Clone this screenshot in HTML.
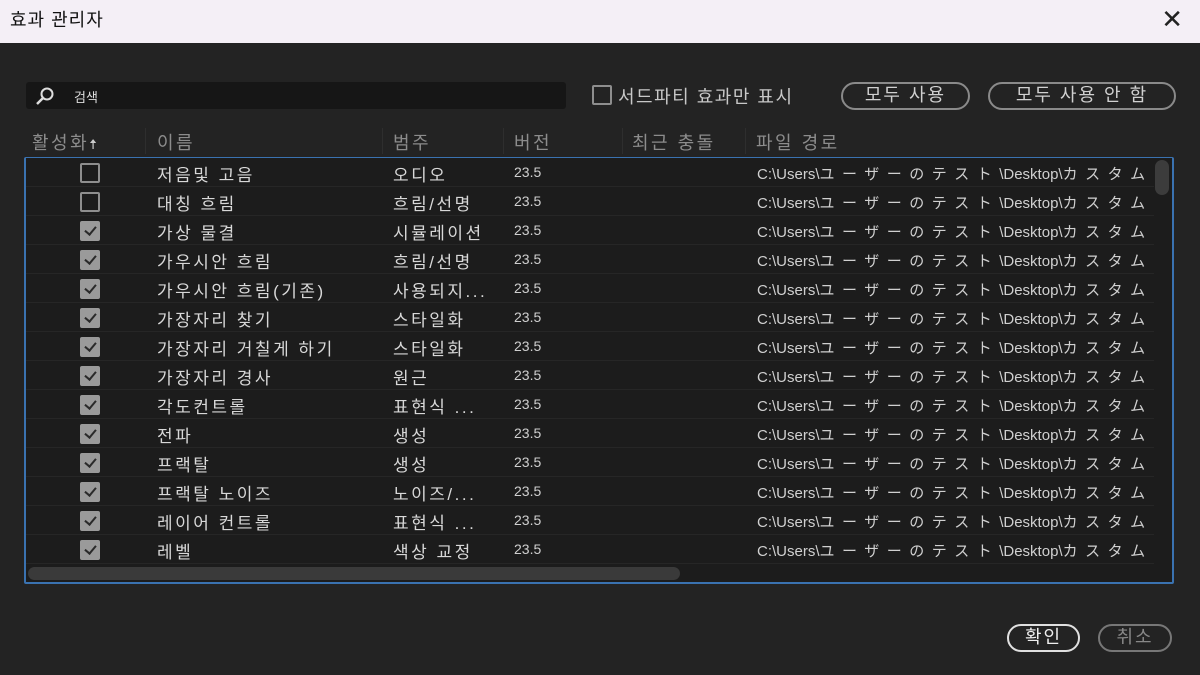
<!DOCTYPE html>
<html><head><meta charset="utf-8"><style>
*{margin:0;padding:0;box-sizing:border-box}
body{width:1200px;height:675px;background:#232323;font-family:"Liberation Sans","Noto Sans CJK KR",sans-serif;color:#d6d6d6;position:relative;overflow:hidden}
.title{position:absolute;left:0;top:0;width:1200px;height:43px;background:#f4eff6;color:#111;font-size:18px;line-height:40px;padding-left:10px;letter-spacing:1px}
.x{position:absolute;right:16px;top:6px;font-size:26px;color:#222;line-height:26px}
.search{position:absolute;left:26px;top:82px;width:540px;height:27px;background:#161616;border-radius:3px}
.search span{position:absolute;left:48px;top:5px;font-size:13px;color:#ddd}
.a{position:absolute}
.btn{position:absolute;border:2px solid #8a8a8a;border-radius:14px;font-size:18px;text-align:center;color:#d0d0d0;line-height:23px;letter-spacing:2px}
.hd{position:absolute;top:129px;font-size:18px;color:#8c8c8c;letter-spacing:2.5px}
.sep{position:absolute;top:128px;width:1px;height:26px;background:#2e2e2e}
.panel{position:absolute;left:24px;top:157px;width:1150px;height:427px;border:2px solid #3a72b0;border-top-width:1px;background:#1c1c1c;border-radius:2px}
.row{position:absolute;left:0;width:1128px;height:29px;border-bottom:1px solid #262626;font-size:17px;color:#d8d8d8;letter-spacing:2.5px}
.row div{position:absolute;top:3px;white-space:nowrap}
.cb{position:absolute;left:54px;top:5px;width:20px;height:20px;border:2.5px solid #8e8e8e;border-radius:2px}
.cb.on{background:#9a9a9a;border-color:#9a9a9a}
.cb.on:after{content:"";position:absolute;left:5px;top:1px;width:5px;height:9px;border:solid #2a2a2a;border-width:0 2.5px 2.5px 0;transform:rotate(40deg)}
.v{font-size:14px!important;top:6px!important;color:#cfcfcf;letter-spacing:0}
.p{font-size:15px!important;top:5px!important;left:731px;color:#d0d0d0;letter-spacing:0}
.p i{font-style:normal;letter-spacing:7.5px}
</style></head><body>
<div class="title">효과 관리자<span class="x">✕</span></div>
<div class="search"><svg class="a" style="left:9px;top:4px" width="20" height="19" viewBox="0 0 20 19"><circle cx="12" cy="8" r="5.5" fill="none" stroke="#ddd" stroke-width="2"/><line x1="8" y1="12" x2="2" y2="18" stroke="#ddd" stroke-width="2.5"/></svg><span>검색</span></div>
<div class="a" style="left:592px;top:85px;width:20px;height:20px;border:2.5px solid #8e8e8e;border-radius:2px"></div>
<div class="a" style="left:618px;top:83px;font-size:18px;color:#c8c8c8;letter-spacing:1.5px">서드파티 효과만 표시</div>
<div class="btn" style="left:841px;top:82px;width:129px;height:28px">모두 사용</div>
<div class="btn" style="left:988px;top:82px;width:188px;height:28px">모두 사용 안 함</div>
<div class="hd" style="left:32px">활성화<span style="font-size:14px;color:#ccc">🠅</span></div>
<div class="sep" style="left:145px"></div><div class="hd" style="left:157px">이름</div>
<div class="sep" style="left:382px"></div><div class="hd" style="left:393px">범주</div>
<div class="sep" style="left:503px"></div><div class="hd" style="left:514px">버전</div>
<div class="sep" style="left:622px"></div><div class="hd" style="left:632px">최근 충돌</div>
<div class="sep" style="left:745px"></div><div class="hd" style="left:756px">파일 경로</div>
<div class="panel">
<div class="a" style="left:1129px;top:2px;width:14px;height:35px;background:#3c3c3c;border-radius:7px"></div>
<div class="a" style="left:2px;top:409px;width:652px;height:13px;background:#3a3a3a;border-radius:7px"></div>
</div>
<div id="rows" class="a" style="left:26px;top:158px"></div>
<div class="btn" style="left:1007px;top:624px;width:73px;height:28px;border-color:#e0e0e0;color:#eee">확인</div>
<div class="btn" style="left:1098px;top:624px;width:74px;height:28px;color:#888;border-color:#777">취소</div>
<script>
var d=[["저음및 고음","오디오",0],["대칭 흐림","흐림/선명",0],["가상 물결","시뮬레이션",1],["가우시안 흐림","흐림/선명",1],["가우시안 흐림(기존)","사용되지...",1],["가장자리 찾기","스타일화",1],["가장자리 거칠게 하기","스타일화",1],["가장자리 경사","원근",1],["각도컨트롤","표현식 ...",1],["전파","생성",1],["프랙탈","생성",1],["프랙탈 노이즈","노이즈/...",1],["레이어 컨트롤","표현식 ...",1],["레벨","색상 교정",1]];
var h="";d.forEach(function(r,i){h+='<div class="row" style="top:'+(i*29)+'px"><span class="cb'+(r[2]?' on':'')+'"></span><div style="left:131px">'+r[0]+'</div><div style="left:367px">'+r[1]+'</div><div class="v" style="left:488px">23.5</div><div class="p">C:\\Users\\<i>ユーザーのテスト</i>\\Desktop\\<i>カスタム</i></div></div>'});
document.getElementById("rows").innerHTML=h;
</script>
</body></html>
